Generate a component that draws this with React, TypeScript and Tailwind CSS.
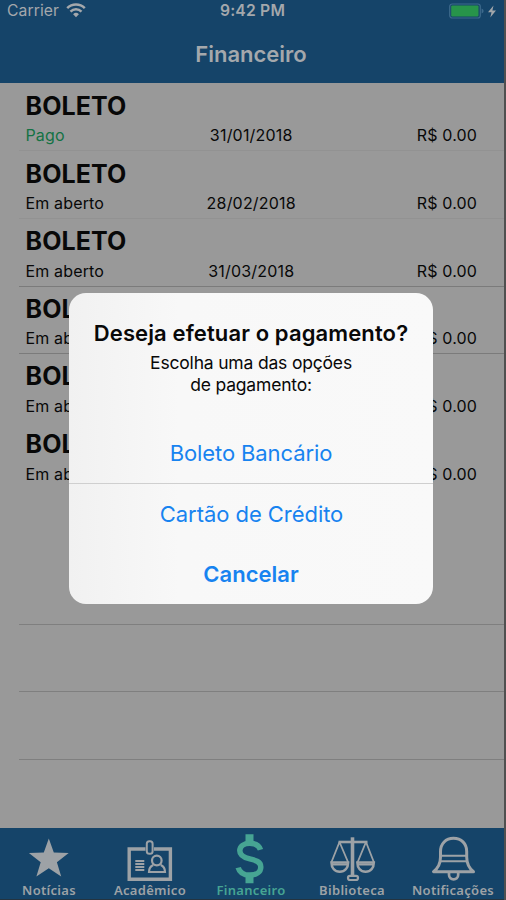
import type { ReactNode } from 'react'

type Boleto = {
    status: string
    date?: string
    paid?: boolean
    line: string
}

const boletos: Boleto[] = [
    { status: 'Pago', date: '31/01/2018', paid: true, line: 'border-[#929292]' },
    { status: 'Em aberto', date: '28/02/2018', line: 'border-[#929292]' },
    { status: 'Em aberto', date: '31/03/2018', line: 'border-[#7b7b7b]' },
    { status: 'Em aberto', line: 'border-[#7b7b7b]' },
    { status: 'Em aberto', line: 'border-transparent' },
    { status: 'Em aberto', line: 'border-transparent' },
]

const emptyRows = [
    'border-transparent',
    'border-[#7f7f7f]',
    'border-[#7f7f7f]',
    'border-[#7f7f7f]',
]

function StatusBar() {
    return (
        <div className="relative flex h-[21px] items-center justify-between px-[7px] text-[15.7px] leading-[21px]">
            <div className="flex items-center gap-[7px]">
                <span className="tracking-[0.1px]">Carrier</span>
                <svg width="20" height="15" viewBox="0 0 20 15" fill="none" stroke="currentColor" strokeWidth="2.5">
                    <path d="M1.2 5.2a12.5 12.5 0 0 1 17.6 0" />
                    <path d="M4.5 8.6a7.8 7.8 0 0 1 11 0" />
                    <path d="M10 14.3 7.1 11.3a4.1 4.1 0 0 1 5.8 0z" fill="currentColor" stroke="none" />
                </svg>
            </div>
            <span className="absolute inset-x-0 pl-[1px] text-center font-semibold tracking-[0.2px]">9:42 PM</span>
            <svg width="48" height="16" viewBox="0 0 48 16">
                <rect x="0.7" y="1" width="30.6" height="14" rx="2.5" fill="none" stroke="#3d6a8c" strokeWidth="1.2" />
                <rect x="2.2" y="2.5" width="27.3" height="11" rx="1" fill="#27944a" />
                <path d="M32.6 5.5c2.6.8 2.6 4.2 0 5z" fill="#3d6a8c" />
                <path d="m44.5 2.5-5.5 6.700h3.500l-1.200 5.300 5.700-7.100h-3.600z" fill="#a1a6aa" />
            </svg>
        </div>
    )
}

function BoletoRow({ status, date, paid, line }: Boleto) {
    return (
        <div className={`ml-[19px] flex h-[67.65px] flex-col border-b pl-[6.5px] pr-[27px] pt-[5.3px] ${line}`}>
            <h2 className="mb-[0.5px] text-[25px] font-bold leading-[34px] tracking-[0.1px]">BOLETO</h2>
            <div className="grid grid-cols-[1fr_100px_1fr] text-[16px] leading-[24px] tracking-[0.15px]">
                <span className={paid ? 'text-[#137244]' : ''}>{status}</span>
                {date && <span className="whitespace-nowrap text-center tracking-[0.2px]">{date}</span>}
                <span className="col-start-3 text-right">R$ 0.00</span>
            </div>
        </div>
    )
}

function Tab({ label, active, children }: { label: string; active?: boolean; children: ReactNode }) {
    return (
        <div className={`flex w-[101px] shrink-0 flex-col items-center ${active ? 'text-[#46a493]' : 'text-[#9da2a6]'}`}>
            <svg width="50" height="54" viewBox="0 0 50 54" fill="none" stroke="currentColor" className="overflow-visible">
                {children}
            </svg>
            <span className="whitespace-nowrap pl-[1px] font-['Noto_Sans',sans-serif] text-[13px] font-semibold leading-[16px] tracking-[0.3px]">
                {label}
            </span>
        </div>
    )
}

function TabBar() {
    return (
        <nav className="h-[72px] border-b border-[#243440] bg-[#154469]">
            <div className="-ml-[2px] flex">
                <Tab label="Notícias">
                    <path d="m24.8 10.500 5 14 14.900.5-11.800 9.200 4.300 14.300-12.400-8.300-12.400 8.300 4.300-14.300L4.900 25l14.900-.5z" fill="currentColor" stroke="none" />
                </Tab>
                <Tab label="Acadêmico">
                    <path d="M20.5 21H4.2v30.200h41.200V21H29" strokeWidth="3.4" />
                    <rect x="21.8" y="13.3" width="5.8" height="12.5" rx="2.5" strokeWidth="2" />
                    <path d="M10.3 33h9M10.300 36h9M10.300 39h9M10.300 42h9" strokeWidth="2" />
                    <circle cx="31.8" cy="32.5" r="4.8" strokeWidth="2.2" />
                    <path d="M28.3 37c-2.800 1.200-4.300 3.200-4.300 7h16c0-3.800-1.500-5.800-4.300-7" strokeWidth="2.2" />
                </Tab>
                <Tab label="Financeiro" active>
                    <path d="M34.500 21.800c-1.300-4.200-5-6.500-10.700-6.500-6 0-10 3-10 7.500 0 5.300 4.600 6.900 10 8.100 5.800 1.300 11 2.700 11 8 0 5-4.500 8.200-11 8.200-6.200 0-10.300-2.700-11.600-7.500" strokeWidth="5.5" />
                    <path d="M23.5 6.300v8M23.500 47.500v7.800" strokeWidth="8" />
                </Tab>
                <Tab label="Biblioteca">
                    <path d="M25.5 9.300v38" strokeWidth="3.6" />
                    <path d="M11.5 14h29" strokeWidth="2.6" />
                    <path d="M12.5 14 4.500 34M12.500 14l8.500 20M39 14l-8.300 20M39 14l7.800 20" strokeWidth="1.8" />
                    <path d="M4.5 34.500h16.600c0 5.500-3.300 9.200-8.300 9.200s-8.300-3.700-8.300-9.200zM30.400 34.500h16.400c0 5.500-3.200 9.200-8.200 9.200s-8.200-3.700-8.200-9.200z" strokeWidth="2.6" />
                    <path d="M5 36.500h16M31 36.500h15.500" strokeWidth="2" />
                    <rect x="21" y="47.8" width="10" height="4.2" rx="2" strokeWidth="2.2" />
                </Tab>
                <Tab label="Notificações">
                    <path d="M5.5 43.700h40c-4.500-3.500-6.800-8-6.800-14.700v-5.500c0-7.800-5.500-13.300-13.200-13.300s-13 5.500-13 13.300V29c0 6.700-2.500 11.200-7 14.700z" strokeWidth="3" strokeLinejoin="round" />
                    <path d="M13 27.700h25.500M12.500 33.300h27" strokeWidth="2" />
                    <path d="M21 45v1.800c0 6 9.200 6 9.200 0V45" strokeWidth="2.7" />
                </Tab>
            </div>
        </nav>
    )
}

function PaymentAlert() {
    return (
        <div
            role="alertdialog"
            className="absolute left-[69px] top-[293px] flex h-[311px] w-[364px] flex-col overflow-hidden rounded-[17px] bg-linear-to-r from-[#f1f1f1] via-[#f8f8f8] via-30% to-[#f9f9f9] text-center"
        >
            <div className="flex h-[130px] flex-col pt-[25px]">
                <h3 className="whitespace-nowrap text-[22px] font-semibold leading-[31px] tracking-[0.12px]">
                    Deseja efetuar o pagamento?
                </h3>
                <p className="mt-[3px] text-[17.5px] leading-[21.5px] tracking-[-0.18px]">
                    Escolha uma das opções
                    <br />
                    de pagamento:
                </p>
            </div>
            <button className="h-[61px] border-b border-[#cfcfcf] text-[22px] tracking-[-0.1px] text-[#1783f0]">
                Boleto Bancário
            </button>
            <button className="h-[60px] pl-[1px] text-[22px] tracking-[-0.05px] text-[#1783f0]">Cartão de Crédito</button>
            <button className="h-[60px] text-[22px] font-semibold text-[#1783f0]">Cancelar</button>
        </div>
    )
}

export default function App() {
    return (
        <div className="relative h-[900px] w-[506px] overflow-hidden border-r-2 border-[#505050] bg-[#999999] font-['Inter',sans-serif] text-[#080808]">
            <header className="h-[83px] bg-[#154469] text-[#a4a8ac]">
                <StatusBar />
                <h1 className="pt-[16px] pr-[2px] text-center text-[22px] font-semibold leading-[34px]">Financeiro</h1>
            </header>
            <main className="h-[745px] pt-[0.6px]">
                {boletos.map((boleto, i) => (
                    <BoletoRow key={i} {...boleto} />
                ))}
                {emptyRows.map((line, i) => (
                    <div key={i} className={`ml-[19px] h-[67.65px] border-b ${line}`} />
                ))}
            </main>
            <TabBar />
            <PaymentAlert />
        </div>
    )
}
